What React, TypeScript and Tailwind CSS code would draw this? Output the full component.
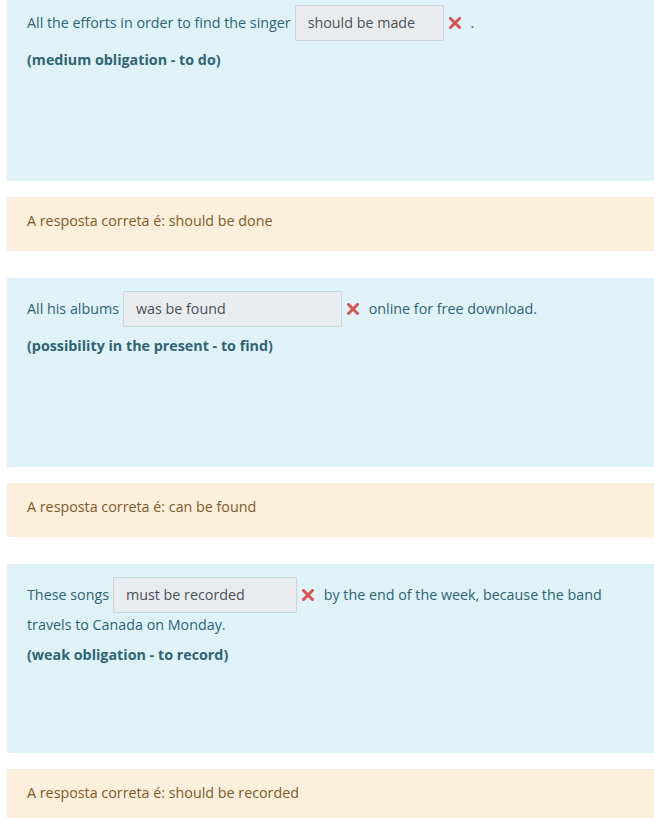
function WrongIcon() {
  return (
    <svg viewBox="0 0 12 12" className="ml-[1px] mr-[3px] inline-block h-[12px] w-[12px] align-[-1px]">
      <path d="M1.5 1.5 L10.5 10.5 M10.5 1.5 L1.5 10.5" stroke="#d9534f" strokeWidth="3" strokeLinecap="round" />
    </svg>
  );
}

function Answer({ value, width }: { value: string; width: string }) {
  return (
    <span
      className={`mx-1 inline-block h-[36px] ${width} rounded-[1px] border border-[#ced4da] bg-[#e9ecef] px-3 align-baseline leading-[34px] text-[#495057]`}
    >
      {value}
    </span>
  );
}

function Question({ children, hint }: { children: React.ReactNode; hint: string }) {
  return (
    <div className="h-[189px] bg-[#def2f8] px-5 pt-[13px] text-[#2f6473]">
      <div className="leading-[23px]">{children}</div>
      <p className="mt-[8px] font-bold leading-[22px]">{hint}</p>
    </div>
  );
}

function Outcome({ text }: { text: string }) {
  return (
    <div className="mt-4 h-[54px] bg-[#fcefdc] px-5 pt-[12px] leading-[24px] text-[#7d5a29]">
      A resposta correta é: {text}
    </div>
  );
}

export default function App() {
  return (
    <div className="min-h-[818px] overflow-hidden bg-white pl-[7px] text-[14.3px] font-['Open_Sans',sans-serif]">
      <div className="-mt-2">
        <Question hint="(medium obligation - to do)">
          All the efforts in order to find the singer
          <Answer value="should be made" width="w-[149px]" />
          <WrongIcon /> <span className="ml-[3px]">.</span>
        </Question>
        <Outcome text="should be done" />
      </div>

      <div className="mt-[27px]">
        <Question hint="(possibility in the present - to find)">
          All his albums
          <Answer value="was be found" width="w-[219px]" />
          <WrongIcon /> <span className="ml-[3px]">online for free download.</span>
        </Question>
        <Outcome text="can be found" />
      </div>

      <div className="mt-[27px]">
        <Question hint="(weak obligation - to record)">
          These songs
          <Answer value="must be recorded" width="w-[184px]" />
          <WrongIcon /> <span className="ml-[3px]">by the end of the week, because the band travels to Canada on Monday.</span>
        </Question>
        <Outcome text="should be recorded" />
      </div>
    </div>
  );
}
